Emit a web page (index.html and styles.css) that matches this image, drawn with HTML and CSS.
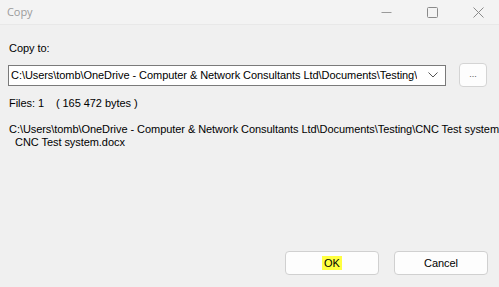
FILE: index.html
```html
<!DOCTYPE html>
<html>
<head>
<meta charset="utf-8">
<link rel="stylesheet" href="styles.css">
</head>
<body>
<div class="window">
  <div class="titlebar">
    <span class="title">Copy</span>
    <div class="controls">
      <span class="ctl"><svg width="11" height="11" viewBox="0 0 11 11"><path d="M0.5 5.5H10.5" stroke="#9a9a9a" stroke-width="1"/></svg></span>
      <span class="ctl"><svg width="11" height="11" viewBox="0 0 11 11"><rect x="0.5" y="0.5" width="10" height="10" rx="1" fill="none" stroke="#8a8a8a" stroke-width="1"/></svg></span>
      <span class="ctl"><svg width="11" height="11" viewBox="0 0 11 11"><path d="M0.5 0.5L10.5 10.5M10.5 0.5L0.5 10.5" stroke="#8a8a8a" stroke-width="1"/></svg></span>
    </div>
  </div>
  <div class="content">
    <div class="label">Copy to:</div>
    <div class="row">
      <div class="combo">
        <span class="combo-text">C:\Users\tomb\OneDrive - Computer &amp; Network Consultants Ltd\Documents\Testing\</span>
        <svg class="arrow" width="10" height="6" viewBox="0 0 10 6"><path d="M0.5 0.5L5 5L9.5 0.5" fill="none" stroke="#555" stroke-width="1"/></svg>
      </div>
      <div class="browse">...</div>
    </div>
    <div class="files">Files: 1&nbsp;&nbsp;&nbsp;&nbsp;( 165 472 bytes )</div>
    <div class="paths">
      <div class="pathline">C:\Users\tomb\OneDrive - Computer &amp; Network Consultants Ltd\Documents\Testing\CNC Test system.docx</div>
      <div class="pathline indent">CNC Test system.docx</div>
    </div>
    <div class="buttons">
      <div class="btn"><span class="hl">OK</span></div>
      <div class="btn">Cancel</div>
    </div>
  </div>
</div>
</body>
</html>
```
FILE: styles.css
```css
html, body {
  margin: 0;
  padding: 0;
  width: 499px;
  height: 287px;
  overflow: hidden;
  background: #f0f0f0;
}
.window {
  width: 499px;
  height: 287px;
  display: flex;
  flex-direction: column;
  font-family: "Liberation Sans", Arial, sans-serif;
  font-size: 11px;
  letter-spacing: -0.06px;
  color: #000;
}
.titlebar {
  height: 24px;
  display: flex;
  align-items: center;
  justify-content: space-between;
  background: #f3f3f3;
  border-bottom: 1px solid #e8e8e8;
}
.title {
  padding-left: 7px;
  font-family: "Open Sans", "Noto Sans", sans-serif;
  font-size: 11px;
  color: #9b9b9b;
  margin-top: -1px;
}
.controls {
  display: flex;
  align-items: center;
  height: 100%;
  margin-right: -2px;
}
.ctl {
  width: 46px;
  display: flex;
  justify-content: center;
  align-items: center;
}
.ctl svg { display: block; }
.content {
  flex: 1;
  display: flex;
  flex-direction: column;
  padding: 16px 12px 0 8px;
}
.label {
  padding-left: 1px;
  line-height: 14px;
}
.row {
  display: flex;
  align-items: center;
  margin-top: 8px;
}
.combo {
  width: 437px;
  height: 19px;
  border: 1px solid #7a7a7a;
  background: #fff;
  display: flex;
  align-items: center;
  justify-content: space-between;
  box-sizing: content-box;
}
.combo-text {
  padding-left: 2px;
  white-space: nowrap;
  overflow: hidden;
}
.arrow {
  margin-right: 7px;
  flex: none;
}
.browse {
  margin-left: 13px;
  width: 28px;
  height: 24px;
  border: 1px solid #d4d4d4;
  border-radius: 4px;
  background: #fdfdfd;
  display: flex;
  justify-content: center;
  align-items: center;
  font-size: 9px;
  color: #555;
  padding-bottom: 2px;
  box-sizing: border-box;
}
.files {
  margin-top: 9px;
  padding-left: 1px;
  line-height: 14px;
}
.paths {
  margin-top: 13px;
  padding-left: 1px;
  line-height: 13px;
  white-space: nowrap;
  overflow: hidden;
  margin-right: -12px;
}
.indent {
  padding-left: 6px;
}
.buttons {
  margin-top: auto;
  margin-bottom: 12px;
  display: flex;
  justify-content: flex-end;
  gap: 15px;
  margin-right: -1px;
}
.btn {
  width: 94px;
  height: 24px;
  box-sizing: border-box;
  border: 1px solid #d0d0d0;
  border-radius: 4px;
  background: #fdfdfd;
  display: flex;
  justify-content: center;
  align-items: center;
}
.hl {
  background: #ffff40;
  padding: 1px 2px;
}
```
